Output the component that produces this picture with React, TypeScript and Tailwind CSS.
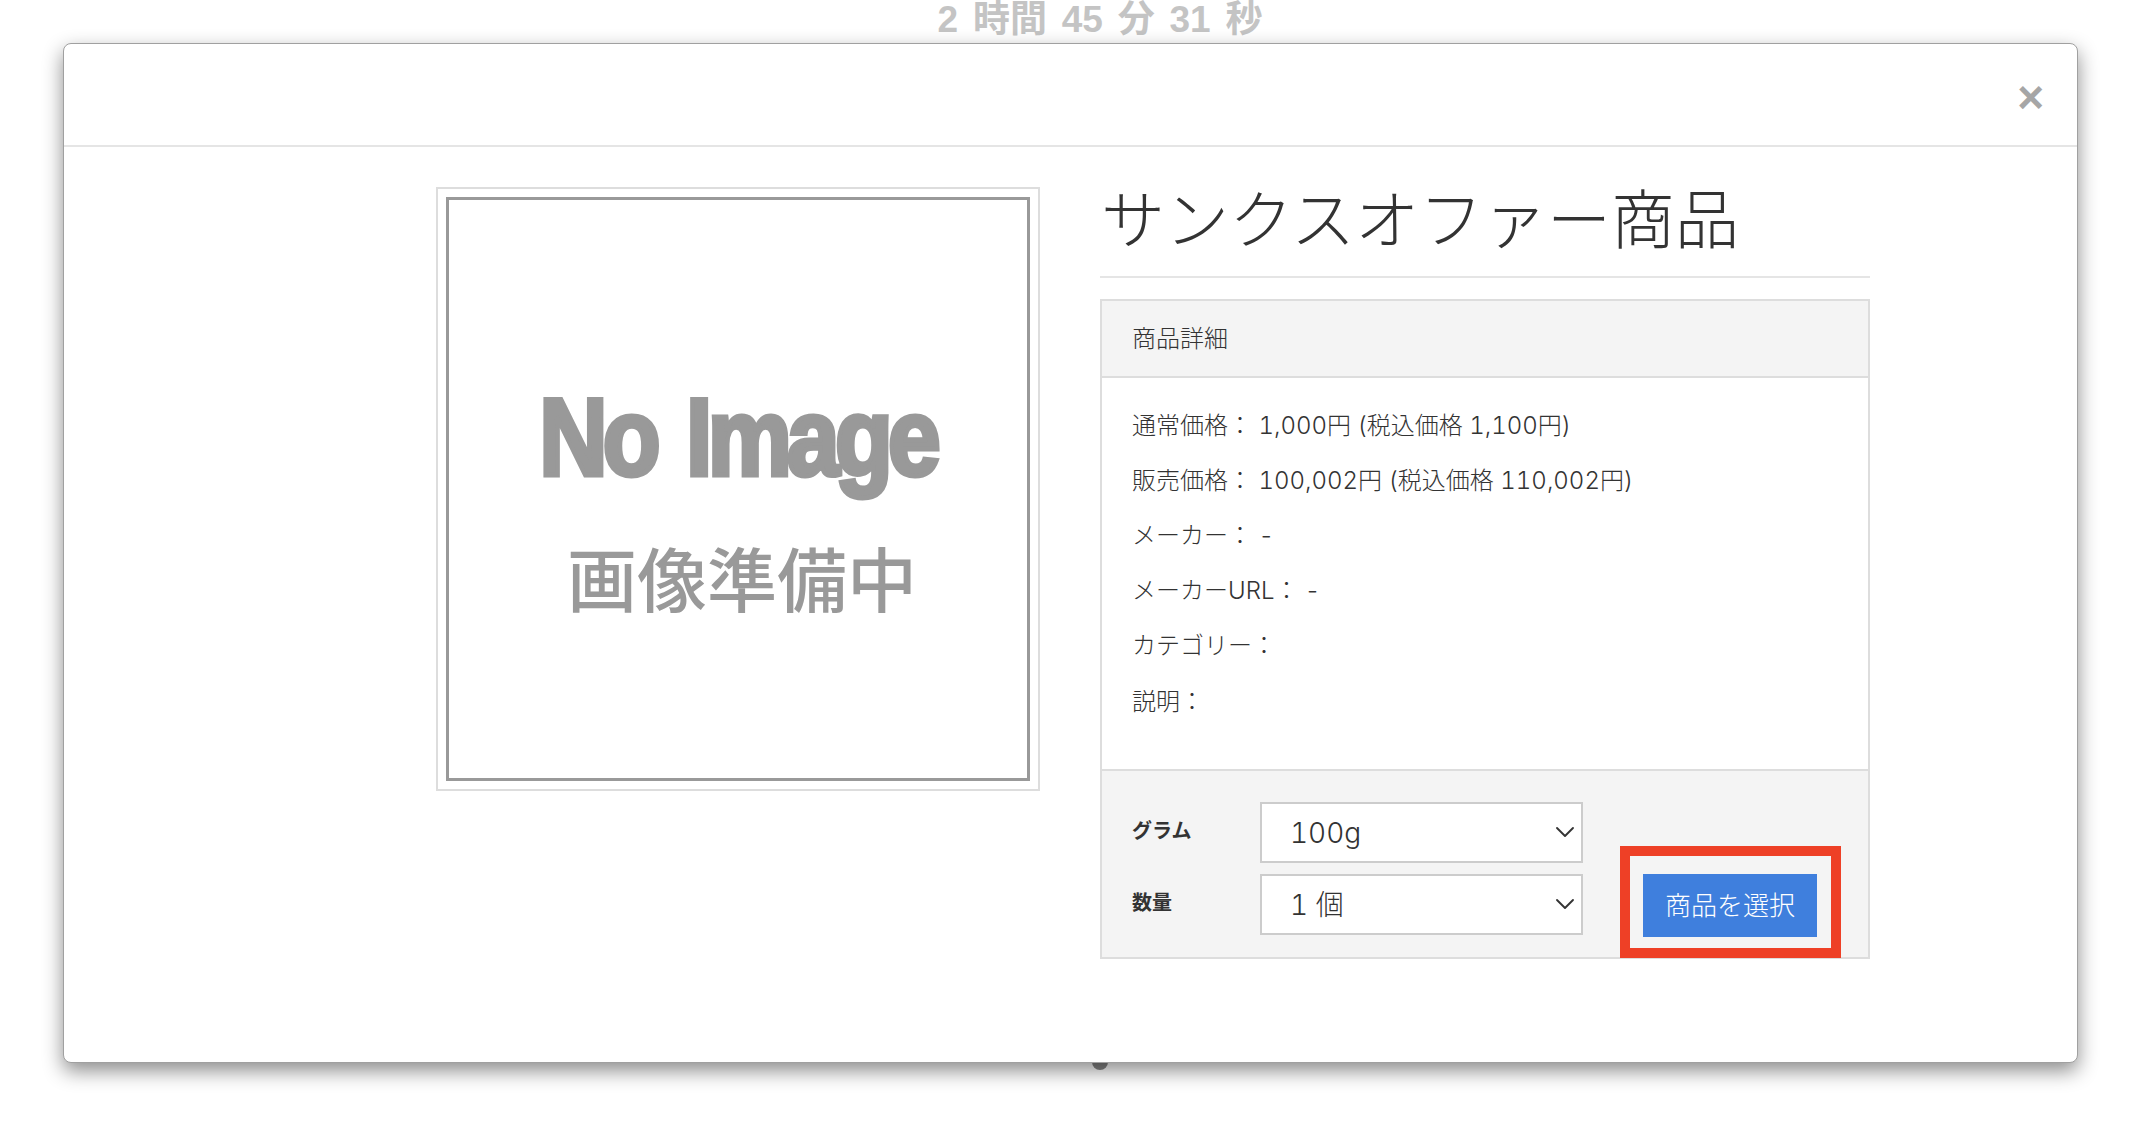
import { ChevronDown } from "lucide-react"

const sans = "font-['Inter','Noto_Sans_CJK_JP',sans-serif]"

const details = [
  "通常価格： 1,000円 (税込価格 1,100円)",
  "販売価格： 100,002円 (税込価格 110,002円)",
  "メーカー： -",
  "メーカーURL： -",
  "カテゴリー：",
  "説明：",
]

function SelectRow({ label, value }: { label: string; value: string }) {
  return (
    <div className="flex items-center">
      <span className="w-[158px] pl-[30px] pb-[4px] text-[20px] font-bold text-[#333]">{label}</span>
      <div className="relative h-[61px] w-[323px]">
        <select className="h-full w-full appearance-none border-2 border-[#ccc] bg-white pl-[28px] text-[28px] font-light text-[#333] tabular-nums" defaultValue={value}>
          <option>{value}</option>
        </select>
        <ChevronDown className="pointer-events-none absolute right-[2px] top-[14px] h-[32px] w-[32px] text-[#333]" strokeWidth={1.4} />
      </div>
    </div>
  )
}

export default function App() {
  return (
    <div className={`relative flex h-[1122px] w-[2154px] flex-col overflow-hidden bg-white ${sans}`}>
      {/* timer behind the modal */}
      <div className="flex h-[43px] items-center justify-center pl-[46px] pb-[3px] text-[37px] font-bold text-[#c4c4c4] [word-spacing:4.5px] font-['Liberation_Sans','Noto_Sans_CJK_JP',sans-serif]">
        2 時間 45 分 31 秒
      </div>

      <div className="absolute left-[1092px] top-[1054px] h-[16px] w-[16px] rounded-full bg-[#888]" />

      {/* modal */}
      <div className="relative ml-[63px] h-[1020px] w-[2015px] rounded-[8px] border-[1.5px] border-[#a0a0a0] bg-white shadow-[0_8px_20px_rgba(0,0,0,0.45)]">
        <div className="flex h-[103px] justify-end border-b-2 border-[#e5e5e5] pr-[33px] pt-[30px]">
          <span className="text-[46px] leading-[46px] font-bold text-[#a6a6a6] font-['Liberation_Sans',sans-serif]">×</span>
        </div>

        <div className="flex pl-[372px] pt-[40px]">
          {/* placeholder picture */}
          <div className="h-[604px] w-[604px] shrink-0 border-2 border-[#ddd] p-[8px]">
            <div className="flex h-full w-full flex-col items-center border-[3px] border-[#999] text-[#999]">
              <div className="mt-[177px] h-[120px] origin-center scale-x-[0.86] text-[110px] leading-[120px] font-bold tracking-tighter whitespace-nowrap [word-spacing:10px] [-webkit-text-stroke:5px_#999] font-['Liberation_Sans',sans-serif]">
                No Image
              </div>
              <div className="mt-[35px] pl-[8px] text-[70px] leading-[90px] font-medium font-['Noto_Sans_CJK_JP',sans-serif]">画像準備中</div>
            </div>
          </div>

          {/* product column */}
          <div className="ml-[60px] w-[770px]">
            <h1 className="h-[91px] border-b-2 border-[#e5e5e5] pl-[1px] text-[64px] leading-[66px] font-light text-[#333]">サンクスオファー商品</h1>

            <div className="mt-[21px] border-2 border-[#ddd]">
              <div className="flex h-[75px] items-center bg-[#f4f4f4] pl-[30px] text-[24px] font-light text-[#333]">商品詳細</div>
              <div className="h-[395px] border-y-2 border-[#ddd] pl-[30px] pt-[20px] text-[24px] font-light text-[#333] tabular-nums">
                {details.map((d) => (
                  <div key={d} className="flex h-[55.2px] items-center whitespace-pre">{d}</div>
                ))}
              </div>
              <div className="relative flex h-[186px] justify-between bg-[#f4f4f4]">
                <div className="flex flex-col gap-[11px] pt-[31px]">
                  <SelectRow label="グラム" value="100g" />
                  <SelectRow label="数量" value="1 個" />
                </div>
                <div className="relative mb-[20px] mr-[51px] self-end">
                  <button className="h-[63px] w-[174px] bg-[#3f7fdd] text-[26px] font-light text-white">商品を選択</button>
                  {/* red annotation box */}
                  <div className="absolute -bottom-[21px] -left-[23px] -right-[24px] -top-[28px] border-10 border-[#ee4026]" />
                </div>
              </div>
            </div>
          </div>
        </div>
      </div>
    </div>
  )
}
